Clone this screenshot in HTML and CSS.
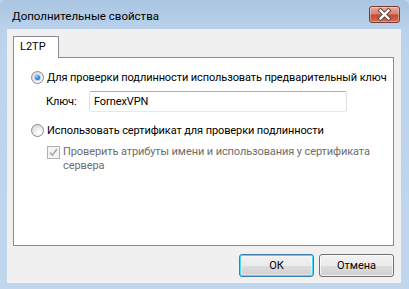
FILE: index.html
```html
<!DOCTYPE html>
<html lang="ru">
<head>
<meta charset="utf-8">
<title>Дополнительные свойства</title>
<link rel="stylesheet" href="styles.css">
</head>
<body>
<div class="window">
  <div class="titlebar">
    <span class="title">Дополнительные свойства</span>
    <div class="close">
      <svg width="29" height="15" viewBox="0 0 29 15">
        <path d="M10.5 3.5 L18.5 11.5 M18.5 3.5 L10.5 11.5" stroke="#5a4040" stroke-width="4.2" stroke-linecap="square" fill="none"/>
        <path d="M10.5 3.5 L18.5 11.5 M18.5 3.5 L10.5 11.5" stroke="#ffffff" stroke-width="2.4" stroke-linecap="square" fill="none"/>
      </svg>
    </div>
  </div>
  <div class="client">
    <div class="tabs"><div class="tab">L2TP</div></div>
    <div class="panel">
      <div class="opt opt-psk"><span class="radio checked"></span><span class="label">Для проверки подлинности использовать предварительный ключ</span></div>
      <div class="keyrow"><span class="keylabel">Ключ:</span><div class="edit">FornexVPN</div></div>
      <div class="opt opt-cert"><span class="radio"></span><span class="label">Использовать сертификат для проверки подлинности</span></div>
      <div class="checkrow">
        <span class="checkbox">
          <svg width="11" height="11" viewBox="0 0 11 11"><path d="M2 5.5 L4.3 8.3 L9 2" stroke="#a8a8a8" stroke-width="1.6" fill="none"/></svg>
        </span>
        <span class="disabled-text">Проверить атрибуты имени и использования у сертификата<br>сервера</span>
      </div>
    </div>
    <div class="buttons">
      <div class="btn default">ОК</div>
      <div class="btn">Отмена</div>
    </div>
  </div>
</div>
</body>
</html>
```

FILE: styles.css
```css
* { box-sizing: border-box; }
html, body { margin: 0; padding: 0; }
body {
  font-family: Roboto, "Noto Sans", sans-serif;
  font-size: 11px;
  color: #000;
  background: #bcd4ec;
}
.window {
  width: 409px;
  height: 289px;
  display: flex;
  flex-direction: column;
  padding: 0 8px 6px 7px;
  background: linear-gradient(#a9c5e2 0px, #b9d1ea 28px, #bcd4ec 60px, #bfd6ed 100%);
  border-radius: 6px 6px 0 0;
}
.titlebar {
  height: 29px;
  display: flex;
  align-items: flex-start;
  padding-left: 5px;
}
.title {
  margin-top: 8px;
  font-size: 11.5px;
  line-height: 16px;
  color: #000;
}
.close {
  margin-left: auto;
  margin-right: 1px;
  margin-top: 6px;
  width: 31px;
  height: 17px;
  border: 1px solid #7e3a30;
  border-radius: 3px;
  background: linear-gradient(#e9a99b 0%, #d8836f 45%, #c24a32 55%, #cf6f56 100%);
  box-shadow: inset 0 0 0 1px rgba(255,255,255,0.35);
  display: flex;
  align-items: center;
  justify-content: center;
}
.close svg { display: block; }
.client {
  flex: 1;
  background: #f0f0f0;
  display: flex;
  flex-direction: column;
  padding: 7px 7px 6px 6px;
}
.tabs {
  display: flex;
  height: 21px;
}
.tab {
  width: 46px;
  height: 22px;
  margin-bottom: -1px;
  position: relative;
  z-index: 1;
  background: #fff;
  border: 1px solid #898c95;
  border-bottom: none;
  padding-left: 6px;
  line-height: 20px;
}
.panel {
  height: 189px;
  background: #fff;
  border: 1px solid #898c95;
  padding: 12px 0 0 17px;
  display: flex;
  flex-direction: column;
  letter-spacing: -0.1px;
}
.opt {
  display: flex;
  align-items: center;
  height: 15px;
  line-height: 15px;
  white-space: nowrap;
}
.radio {
  width: 13px;
  height: 13px;
  border-radius: 50%;
  border: 1px solid #8b8c8e;
  background: radial-gradient(circle at 65% 70%, #ffffff 0%, #f2f2f2 35%, #d4d4d4 90%);
  margin-right: 3px;
  flex: none;
  display: flex;
  align-items: center;
  justify-content: center;
}
.radio.checked::after {
  content: "";
  width: 5px;
  height: 5px;
  border-radius: 50%;
  background: radial-gradient(circle at 40% 35%, #9ad3ff 0%, #3a8ce0 45%, #12409a 100%);
  box-shadow: 0 0 0 1px #b9d4ec;
}
.keyrow {
  display: flex;
  align-items: center;
  margin-top: 6px;
  padding-left: 15px;
}
.keylabel {
  width: 43px;
  flex: none;
}
.edit {
  width: 258px;
  height: 21px;
  border: 1px solid #abadb3;
  border-left-color: #e2e3ea;
  border-right-color: #dbdfe6;
  border-bottom-color: #e3e9ef;
  border-radius: 2px;
  padding-left: 4px;
  line-height: 19px;
  background: #fff;
}
.opt-cert { margin-top: 11px; }
.checkrow {
  display: flex;
  align-items: flex-start;
  margin-top: 7px;
  padding-left: 16px;
}
.checkbox {
  width: 13px;
  height: 13px;
  margin-top: 1px;
  border: 1px solid #b1b1b1;
  background: #f4f4f4;
  margin-right: 3px;
  flex: none;
  display: flex;
  align-items: center;
  justify-content: center;
}
.checkbox svg { display: block; }
.disabled-text {
  color: #6d6d6d;
  line-height: 14px;
  white-space: nowrap;
}
.buttons {
  display: flex;
  justify-content: flex-end;
  gap: 5px;
  margin-top: 8px;
}
.btn {
  width: 75px;
  height: 23px;
  border: 1px solid #707070;
  border-radius: 3px;
  background: linear-gradient(#f2f2f2 0%, #ebebeb 50%, #dddddd 50%, #cfcfcf 100%);
  box-shadow: inset 0 0 0 1px rgba(255,255,255,0.7);
  text-align: center;
  line-height: 21px;
}
.btn.default {
  border-color: #3c7fb1;
  box-shadow: inset 0 0 0 1px #48d7fd, inset 0 0 0 2px rgba(255,255,255,0.4);
}
```
